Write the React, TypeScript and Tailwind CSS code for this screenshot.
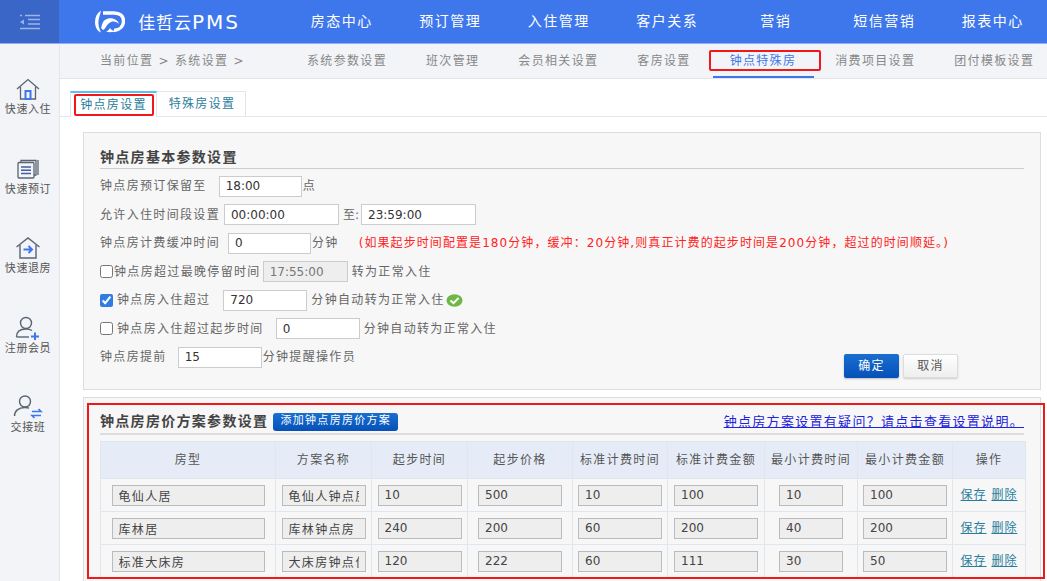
import type { ReactNode } from "react";

const cjk = "font-['DejaVu_Sans','Noto_Sans_CJK_SC',sans-serif]";

const topNav = ["房态中心", "预订管理", "入住管理", "客户关系", "营销", "短信营销", "报表中心"];
const subNav = ["系统参数设置", "班次管理", "会员相关设置", "客房设置", "钟点特殊房", "消费项目设置", "团付模板设置"];

const columns = [
  { title: "房型", width: "w-[175px]", input: "w-[153px]" },
  { title: "方案名称", width: "w-[96px]", input: "w-[84px]" },
  { title: "起步时间", width: "w-[96px]", input: "w-[84px]" },
  { title: "起步价格", width: "w-[105px]", input: "w-[84px]" },
  { title: "标准计费时间", width: "w-[95px]", input: "w-[84px]" },
  { title: "标准计费金额", width: "w-[97px]", input: "w-[84px]" },
  { title: "最小计费时间", width: "w-[93px]", input: "w-[64px]" },
  { title: "最小计费金额", width: "w-[95px]", input: "w-[84px]" },
];

const plans = [
  ["龟仙人居", "龟仙人钟点房", "10", "500", "10", "100", "10", "100"],
  ["库林居", "库林钟点房", "240", "200", "60", "200", "40", "200"],
  ["标准大床房", "大床房钟点住", "120", "222", "60", "111", "30", "50"],
];

function HouseIcon() {
  return (
    <svg width="24" height="22" viewBox="0 0 24 22" fill="none" stroke="#5a6472" strokeWidth="1.3">
      <path d="M1 11 12 1.5 23 11" />
      <path d="M4.5 9v12h15V9" />
      <rect x="9.5" y="13" width="5" height="8" stroke="#3e77ec" strokeWidth="2" />
    </svg>
  );
}

function BookIcon() {
  return (
    <svg width="22" height="20" viewBox="0 0 22 20" fill="none" stroke="#5a6472" strokeWidth="1.3">
      <rect x="1" y="3.5" width="16" height="15.5" rx="1" />
      <path d="M4 3.5V1.5h15V16h-2" />
      <path d="M21 1v15" />
      <path d="M4 8h10M4 11.2h10M4 14.5h10" stroke="#3f5f9f" strokeWidth="1.6" />
    </svg>
  );
}

function CheckoutIcon() {
  return (
    <svg width="26" height="24" viewBox="0 0 26 24" fill="none" stroke="#5a6472" strokeWidth="1.4">
      <path d="M1.5 11 13 2l11.5 9" />
      <path d="M5 9v13h16V9" />
      <path d="M8.5 13.5h8M13.5 10l3.5 3.5-3.5 3.5" stroke="#3e77ec" strokeWidth="2" />
    </svg>
  );
}

function MemberIcon() {
  return (
    <svg width="26" height="24" viewBox="0 0 26 24" fill="none" stroke="#5a6472" strokeWidth="1.4">
      <circle cx="11" cy="7" r="5.5" />
      <path d="M1.5 21c0-5 3.5-8 9.5-8 2.5 0 4.5.5 6 1.5" />
      <path d="M1.5 21H14" />
      <path d="M16 20.5h8M20 16.5v8" stroke="#3e77ec" strokeWidth="2" />
    </svg>
  );
}

function ShiftIcon() {
  return (
    <svg width="30" height="24" viewBox="0 0 30 24" fill="none" stroke="#5a6472" strokeWidth="1.4">
      <circle cx="12" cy="6.5" r="5.5" />
      <path d="M1.5 21c0-5 4-8.5 10.5-8.5 1.5 0 3 .2 4 .6" />
      <path d="M19 16.5h9l-2.5-2.5M28 20.5h-9l2.5 2.5" stroke="#3e77ec" strokeWidth="1.6" />
    </svg>
  );
}

const sideNav = [
  { label: "快速入住", icon: <HouseIcon /> },
  { label: "快速预订", icon: <BookIcon /> },
  { label: "快速退房", icon: <CheckoutIcon /> },
  { label: "注册会员", icon: <MemberIcon /> },
  { label: "交接班", icon: <ShiftIcon /> },
];

function Logo() {
  return (
    <svg width="30" height="23" viewBox="0 0 30 23" fill="none">
      <path d="M6 .5C2 3 0 7 0 12c0 5 2 9 6 10.5-2-4-3-8-2.5-12C4 6.500 5.500 3.500 6 .5z" fill="#fff" />
      <path d="M8 3h11c6 0 9.500 3 9.500 8 0 5-3.500 9-9.500 9.500" stroke="#fff" strokeWidth="3.400" />
      <path d="M8 20c3-1 3-6 8-8 3-1 6 0 8 2-1-5-9-8-14-4-3 2-3 6-4 8z" fill="#fff" />
      <path d="M11 21.500c3 1 7 1 10-.5-3 0-5-1-6-3-1 2-2 3-4 3.500z" fill="#fff" />
    </svg>
  );
}

function MenuToggle() {
  return (
    <svg width="22" height="16" viewBox="0 0 22 16" fill="none" stroke="#9db4e6" strokeWidth="1.5">
      <path d="M6 1.500h15M9 5.500h12M9 10h12M1 14.500h20M1 1.500h2" />
      <path d="M1 8l4-2.500v5z" fill="#9db4e6" stroke="none" />
    </svg>
  );
}

function Field({ value, className, disabled }: { value: string; className: string; disabled?: boolean }) {
  return (
    <input
      readOnly
      disabled={disabled}
      value={value}
      className={`h-[21px] border border-[#ccc] px-[6px] text-[12px] tracking-normal text-[#333] outline-none ${
        disabled ? "bg-[#eee] text-[#777]" : "bg-white"
      } ${className}`}
    />
  );
}

function FormRow({ children }: { children: ReactNode }) {
  return <div className="flex h-[28.5px] items-center whitespace-nowrap">{children}</div>;
}

export default function App() {
  return (
    <div className={`flex h-screen w-full flex-col overflow-hidden bg-white text-[12px] tracking-[1.33px] text-[#666] ${cjk}`}>
      <header className="flex h-[44px] shrink-0 border-b border-[#8fb0f2] bg-[#3e77ec] text-white">
        <div className="flex w-[60px] items-center justify-center bg-[#3a66c8]">
          <MenuToggle />
        </div>
        <div className="flex w-[231px] items-center pl-[36px]">
          <Logo />
          <span className="ml-[13px] text-[17px] tracking-[0.9px] whitespace-nowrap">
            佳哲云<span className="text-[20px] tracking-[2px]">PMS</span>
          </span>
        </div>
        <nav className="flex">
          {topNav.map((item) => (
            <a key={item} className="flex w-[108.5px] items-center justify-center text-[14px] tracking-[1.5px] whitespace-nowrap">
              {item}
            </a>
          ))}
        </nav>
      </header>

      <div className="flex min-h-0 flex-1">
        <aside className="flex w-[60px] shrink-0 flex-col border-r border-[#e3e6ec] bg-[#f2f4f8] pt-[32px] pr-[3px]">
          {sideNav.map((item) => (
            <div key={item.label} className="flex h-[79.5px] flex-col items-center text-[11px] tracking-[0.6px] whitespace-nowrap text-[#555]">
              <div className="flex h-[26px] items-center">{item.icon}</div>
              <span>{item.label}</span>
            </div>
          ))}
        </aside>

        <main className="min-w-0 flex-1">
          <div className="flex h-[35px] items-center border-b border-[#e4e4e4] bg-[#f2f4f7] pl-[40px] whitespace-nowrap text-[#888]">
            <span className="w-[207px]">当前位置 &gt; 系统设置 &gt;</span>
            <div className="flex gap-[39px]">
              {subNav.map((item) =>
                item === "钟点特殊房" ? (
                  <span key={item} className="relative text-[#3e77ec]">
                    {item}
                    <span className="absolute top-[-2px] left-[-21px] h-[21px] w-[112px] rounded-[2px] border-2 border-[#f01818]" />
                    <span className="absolute top-[24px] left-[-17px] h-[2px] w-[101px] bg-[#3e77ec]" />
                  </span>
                ) : (
                  <span key={item}>{item}</span>
                ),
              )}
            </div>
          </div>

          <div className="mt-[12px] flex h-[26px] border-b border-[#e4e8ee] pl-[10px]">
            <div className="relative flex h-[26px] w-[87px] items-center justify-center border-x border-t-2 border-x-[#dfe6ee] border-t-[#5fc0ee] bg-white text-[#2b7d9c]">
              钟点房设置
              <span className="absolute top-[1px] left-[3px] h-[22px] w-[80px] rounded-[2px] border-2 border-[#f01818]" />
            </div>
            <div className="flex h-[25px] w-[89px] items-center justify-center border-t border-r border-[#dfe6ee] pl-[2px] text-[#2b7d9c]">特殊房设置</div>
          </div>

          <section className="mt-[15px] mr-[6px] ml-[23px] h-[258px] border border-[#ddd] bg-[#f7f7f7] pt-[15px] pr-[16px] pl-[16px]">
            <h2 className="h-[21px] border-b border-[#ccc] text-[14px] leading-[18px] font-bold tracking-[1.3px] text-[#444]">钟点房基本参数设置</h2>
            <div className="pt-[3px]">
              <FormRow>
                钟点房预订保留至
                <Field value="18:00" className="ml-[12px] w-[83px]" />
                <span className="ml-px">点</span>
              </FormRow>
              <FormRow>
                允许入住时间段设置
                <Field value="00:00:00" className="ml-[4px] w-[115px]" />
                <span className="ml-[4px] tracking-normal">至:</span>
                <Field value="23:59:00" className="ml-[2px] w-[115px]" />
              </FormRow>
              <FormRow>
                钟点房计费缓冲时间
                <Field value="0" className="ml-[8px] w-[83px]" />
                <span className="ml-px">分钟</span>
                <span className="ml-[20px] tracking-[1.08px] text-[#f22]">(如果起步时间配置是180分钟，缓冲：20分钟,则真正计费的起步时间是200分钟，超过的时间顺延。)</span>
              </FormRow>
              <FormRow>
                <input type="checkbox" readOnly className="mr-px h-[13px] w-[13px] accent-[#2f7de1]" />
                钟点房超过最晚停留时间
                <Field value="17:55:00" disabled className="ml-[2px] w-[85px]" />
                <span className="ml-[4px]">转为正常入住</span>
              </FormRow>
              <FormRow>
                <input type="checkbox" checked readOnly className="mr-[4px] h-[13px] w-[13px] accent-[#2f7de1]" />
                钟点房入住超过
                <Field value="720" className="ml-[13px] w-[84px]" />
                <span className="ml-[4px]">分钟自动转为正常入住</span>
                <svg className="ml-[1px]" width="17" height="13" viewBox="0 0 17 13">
                  <ellipse cx="8.500" cy="6.500" rx="8" ry="6.200" fill="#6fb745" />
                  <path d="M4.500 6.500 7.500 9.200 12.500 4" fill="none" stroke="#fff" strokeWidth="2" />
                </svg>
              </FormRow>
              <FormRow>
                <input type="checkbox" readOnly className="mr-[4px] h-[13px] w-[13px] accent-[#2f7de1]" />
                钟点房入住超过起步时间
                <Field value="0" className="ml-[12px] w-[84px]" />
                <span className="ml-[4px]">分钟自动转为正常入住</span>
              </FormRow>
              <FormRow>
                钟点房提前
                <Field value="15" className="ml-[11px] w-[84px]" />
                <span className="ml-px">分钟提醒操作员</span>
                <div className="mt-[18px] ml-auto flex gap-[4px] pr-[66px]">
                  <button className="h-[24px] w-[55px] rounded-[2px] bg-gradient-to-b from-[#1a6fd0] to-[#0650b8] text-white shadow-[0_1px_2px_#bbb]">确定</button>
                  <button className="h-[24px] w-[55px] rounded-[2px] border border-[#ddd] bg-gradient-to-b from-white to-[#eee] text-[#555] shadow-[0_1px_2px_#ccc]">取消</button>
                </div>
              </FormRow>
            </div>
          </section>

          <section className="relative mt-[7px] mr-[6px] ml-[23px] h-[300px] border border-[#ddd] bg-[#f7f7f7] pt-[15px] pr-[16px] pl-[16px]">
            <span className="pointer-events-none absolute top-[5px] left-[3px] z-10 h-[176px] w-[958px] border-2 border-[#f01818]" />
            <div className="flex h-[22px] items-center border-b-2 border-[#ddd] pb-[3px]">
              <h2 className="text-[14px] font-bold tracking-[1.3px] whitespace-nowrap text-[#444]">钟点房房价方案参数设置</h2>
              <button className="ml-[5px] h-[18px] w-[125px] rounded-[3px] bg-gradient-to-b from-[#1a6fd0] to-[#0650b8] text-[11px] tracking-[1.3px] whitespace-nowrap text-white">添加钟点房房价方案</button>
              <a className="ml-auto text-[13px] tracking-[1.3px] whitespace-nowrap text-[#2222dd] underline">钟点房方案设置有疑问？请点击查看设置说明。</a>
            </div>
            <table className="mt-[6px] w-[925px] table-fixed border-collapse">
              <colgroup>
                {columns.map((col) => (
                  <col key={col.title} className={col.width} />
                ))}
                <col className="w-[73px]" />
              </colgroup>
              <thead>
                <tr className="h-[37px] bg-[#e6ecf7] tracking-[1.33px] text-[#555]">
                  {columns.map((col) => (
                    <th key={col.title} className="border border-[#e0e6f0] p-0 font-normal whitespace-nowrap">{col.title}</th>
                  ))}
                  <th className="border border-[#e0e6f0] p-0 font-normal">操作</th>
                </tr>
              </thead>
              <tbody>
                {plans.map((row) => (
                  <tr key={row[0]} className="h-[33px]">
                    {row.map((value, i) => (
                      <td key={i} className="border border-[#e0e6f0] p-0">
                        <div className="flex justify-center">
                          <input
                            readOnly
                            value={value}
                            className={`h-[21px] border border-[#bbb] bg-[#eee] px-[6px] text-[12px] text-[#444] outline-none ${i < 2 ? "tracking-[1.33px]" : "tracking-normal"} ${columns[i].input}`}
                          />
                        </div>
                      </td>
                    ))}
                    <td className="border border-[#e0e6f0] p-0 text-center tracking-[1px] whitespace-nowrap text-[#2b7d9c]">
                      <a className="underline">保存</a> <a className="underline">删除</a>
                    </td>
                  </tr>
                ))}
              </tbody>
            </table>
          </section>
        </main>
      </div>
    </div>
  );
}
